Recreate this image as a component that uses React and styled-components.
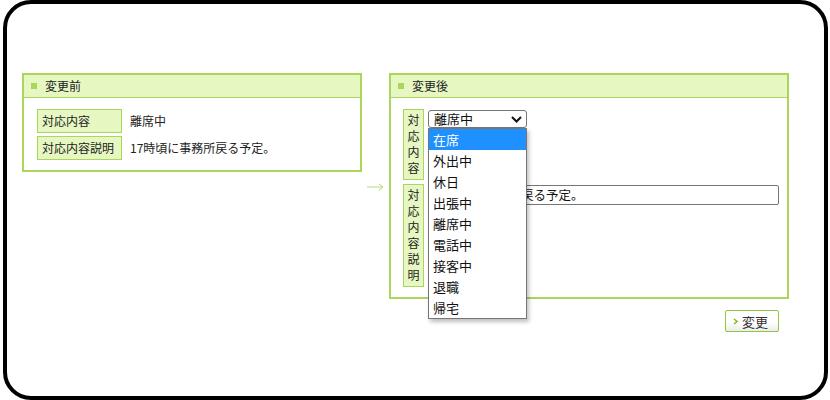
import React from "react";
import styled, { createGlobalStyle } from "styled-components";

const GlobalStyle = createGlobalStyle`
    html, body {
        margin: 0;
        padding: 0;
        background: #fff;
    }
    body {
        font-family: "Noto Sans CJK JP", "Noto Sans", sans-serif;
        color: #222;
    }
`;

const green = "#acd55c";
const paleGreen = "#e6f7c2";

const options = ["在席", "外出中", "休日", "出張中", "離席中", "電話中", "接客中", "退職", "帰宅"];

const App = () => {
    return (
        <>
            <GlobalStyle />
            <Frame>
                <Content>
                    <Columns>
                        <Panel>
                            <PanelHeader>変更前</PanelHeader>
                            <PanelBody>
                                <InfoGrid>
                                    <Label>対応内容</Label>
                                    <Value>離席中</Value>
                                    <Label>対応内容説明</Label>
                                    <Value>17時頃に事務所戻る予定。</Value>
                                </InfoGrid>
                            </PanelBody>
                        </Panel>

                        <ArrowCell>
                            <svg width="18" height="8" viewBox="0 0 18 8">
                                <path d="M0 4 H16 M12 1 L16 4 L12 7" fill="none" stroke="#b3dc72" strokeWidth="1" />
                            </svg>
                        </ArrowCell>

                        <Panel $grow>
                            <PanelHeader>変更後</PanelHeader>
                            <PanelBody $right>
                                <EditGrid>
                                    <VLabel>対応内容</VLabel>
                                    <Field>
                                        <SelectBox>
                                            <span>離席中</span>
                                            <svg width="11" height="7" viewBox="0 0 11 7">
                                                <path d="M1 1 L5.5 5.5 L10 1" fill="none" stroke="#111" strokeWidth="2" />
                                            </svg>
                                        </SelectBox>
                                        <DropList>
                                            {options.map((o, i) => (
                                                <DropItem key={o} $active={i === 0}>{o}</DropItem>
                                            ))}
                                        </DropList>
                                    </Field>
                                    <VLabel>対応内容説明</VLabel>
                                    <Field>
                                        <TextInput>17時頃に事務所戻る予定。</TextInput>
                                    </Field>
                                </EditGrid>
                            </PanelBody>
                        </Panel>
                    </Columns>
                    <ButtonRow>
                        <ChangeButton>
                            <svg width="5" height="7" viewBox="0 0 5 7">
                                <path d="M1 1 L4 3.5 L1 6" fill="none" stroke="#7cc21e" strokeWidth="1.6" />
                            </svg>
                            変更
                        </ChangeButton>
                    </ButtonRow>
                </Content>
            </Frame>
        </>
    );
};

export default App;

const Frame = styled.div`
    box-sizing: border-box;
    width: 825px;
    height: 400px;
    margin-left: 3px;
    border: 4px solid #000;
    border-radius: 28px;
    padding: 69px 0 0 15px;
`;

const Content = styled.div`
    width: 767px;
    display: flex;
    flex-direction: column;
`;

const Columns = styled.div`
    display: flex;
    align-items: flex-start;
`;

const Panel = styled.div`
    box-sizing: border-box;
    width: ${(p) => (p.$grow ? "400px" : "340px")};
    border: 2px solid ${green};
    background: #fff;
`;

const PanelHeader = styled.div`
    display: flex;
    align-items: center;
    height: 22px;
    padding-left: 7px;
    background: ${paleGreen};
    border-bottom: 1px solid ${green};
    font-size: 12px;
    line-height: 22px;
    color: #222;
    &:before {
        content: "";
        width: 6px;
        height: 6px;
        margin-right: 8px;
        background: ${green};
    }
`;

const PanelBody = styled.div`
    padding: ${(p) => (p.$right ? "11px 8px 10px 12px" : "11px 12px 10px 13px")};
`;

const InfoGrid = styled.div`
    display: grid;
    grid-template-columns: 85px 1fr;
    row-gap: 3px;
    column-gap: 8px;
    align-items: center;
`;

const Label = styled.div`
    box-sizing: border-box;
    height: 24px;
    padding-left: 4px;
    background: ${paleGreen};
    border: 1px solid ${green};
    font-size: 12px;
    line-height: 22px;
    color: #222;
`;

const Value = styled.div`
    font-size: 12px;
    line-height: 22px;
    color: #222;
`;

const ArrowCell = styled.div`
    align-self: center;
    width: 27px;
    display: flex;
    justify-content: center;
    padding-top: 2px;
`;

const EditGrid = styled.div`
    display: grid;
    grid-template-columns: 21px 1fr;
    column-gap: 4px;
    row-gap: 4px;
    align-items: start;
`;

const VLabel = styled.div`
    box-sizing: border-box;
    width: 21px;
    padding: 2px 0 3px;
    background: ${paleGreen};
    border: 1px solid ${green};
    font-size: 12px;
    line-height: 16px;
    text-align: center;
    word-break: break-all;
    color: #222;
`;

const Field = styled.div`
    position: relative;
    padding-top: 1px;
`;

const SelectBox = styled.div`
    box-sizing: border-box;
    width: 99px;
    height: 18px;
    display: flex;
    align-items: center;
    justify-content: space-between;
    padding: 0 4px 0 5px;
    border: 1px solid #767676;
    border-radius: 3px;
    background: #fff;
    font-size: 13px;
    line-height: 16px;
    color: #111;
`;

const DropList = styled.div`
    position: absolute;
    top: 19px;
    left: 0;
    z-index: 2;
    box-sizing: border-box;
    width: 99px;
    background: #fff;
    border: 1px solid #767676;
    box-shadow: 2px 3px 4px rgba(0, 0, 0, 0.25);
`;

const DropItem = styled.div`
    height: 21px;
    padding-left: 4px;
    font-size: 13px;
    line-height: 21px;
    background: ${(p) => (p.$active ? "#1e90ff" : "#fff")};
    color: ${(p) => (p.$active ? "#fff" : "#111")};
`;

const TextInput = styled.div`
    box-sizing: border-box;
    width: 351px;
    height: 20px;
    padding-left: 3px;
    border: 1px solid #767676;
    border-radius: 2px;
    font-size: 12.5px;
    line-height: 18px;
    color: #111;
    white-space: nowrap;
`;

const ButtonRow = styled.div`
    display: flex;
    justify-content: flex-end;
    padding: 11px 10px 0 0;
`;

const ChangeButton = styled.button`
    box-sizing: border-box;
    width: 54px;
    height: 22px;
    display: flex;
    align-items: center;
    gap: 4px;
    padding: 0 0 0 7px;
    border: 1px solid #8dc63f;
    border-radius: 2px;
    background: linear-gradient(#ffffff 55%, #ececec);
    font-family: "Noto Sans CJK JP", sans-serif;
    font-size: 13px;
    color: #333;
    cursor: pointer;
`;
